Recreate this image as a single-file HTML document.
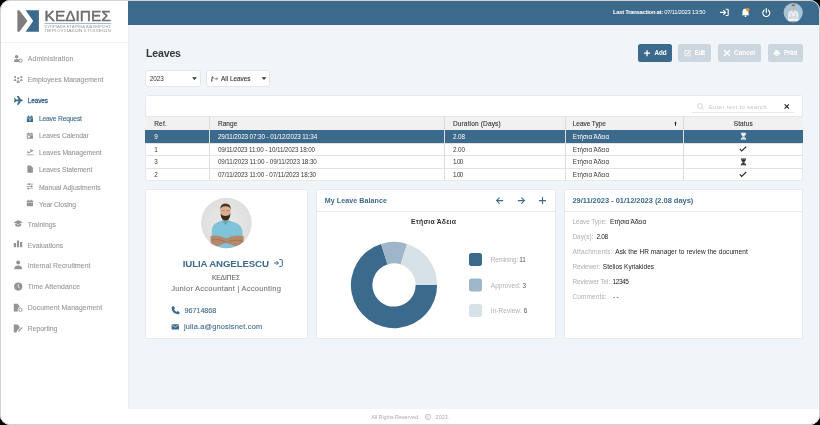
<!DOCTYPE html>
<html><head><meta charset="utf-8">
<style>
html,body{margin:0;padding:0;width:820px;height:425px;overflow:hidden;background:#000;}
#c{position:absolute;left:0;top:0;width:820px;height:425px;border-radius:10px;overflow:hidden;background:#fff;will-change:transform;font-family:"Liberation Sans",sans-serif;}
#bd{position:absolute;left:0;top:0;width:818px;height:423px;border:1px solid #d3d3d3;border-radius:10px;}
.a{position:absolute;box-sizing:border-box}
.t{position:absolute;line-height:1;white-space:nowrap}
svg{position:absolute;overflow:visible}
.card{position:absolute;box-sizing:border-box;background:#fff;border:1px solid #e5e8ec;border-radius:2.5px;}
</style></head><body>
<div id="c">
<!-- sidebar -->
<div class="a" style="left:1px;top:42px;width:127px;height:1px;background:#eef1f5"></div>
<!-- logo -->
<svg style="left:0;top:0" width="120" height="40" viewBox="0 0 120 40">
  <polygon points="17.4,10.3 19.4,10.3 27.4,21 19.4,31.7 17.4,31.7" fill="#7d7d80"/>
  <polygon points="25.6,10.3 38.9,10.3 38.9,31.7 25.6,31.7 33.2,21" fill="#3c6a8c"/>
  <text x="44.6" y="20.8" font-family="Liberation Sans" font-size="14.6" fill="#6d6d70" stroke="#6d6d70" stroke-width="0.45" textLength="66.2" lengthAdjust="spacingAndGlyphs">ΚΕΔΙΠΕΣ</text>
  <rect x="44.6" y="23.1" width="66.5" height="0.6" fill="#5f8db0"/>
  <text x="44.6" y="27.7" font-family="Liberation Sans" font-size="3.3" fill="#9c9ca0" textLength="66.5" lengthAdjust="spacingAndGlyphs">ΚΥΠΡΙΑΚΗ ΕΤΑΙΡΕΙΑ ΔΙΑΧΕΙΡΙΣΗΣ</text>
  <text x="44.6" y="31.5" font-family="Liberation Sans" font-size="3.3" fill="#9c9ca0" textLength="66.5" lengthAdjust="spacingAndGlyphs">ΠΕΡΙΟΥΣΙΑΚΩΝ ΣΤΟΙΧΕΙΩΝ</text>
</svg>
<!-- sidebar icons -->
<svg style="left:0;top:0" width="40" height="340" viewBox="0 0 40 340" fill="#93939a">
  <!-- admin: user-cog -->
  <circle cx="16.6" cy="56.8" r="1.8"/>
  <path d="M13.9 62 Q13.9 59 16.6 59 Q18.6 59 19.2 60 L19.2 62 Z"/>
  <circle cx="20.6" cy="60.6" r="1.6" fill="none" stroke="#959595" stroke-width="1"/>
  <!-- employees -->
  <circle cx="15.1" cy="77.1" r="1.05"/><circle cx="21.3" cy="77.1" r="1.05"/><circle cx="18.2" cy="78.3" r="1.15"/>
  <path d="M13.8 80.9 q0 -1.9 1.3 -1.9 q1.3 0 1.3 1.9z M20 80.9 q0 -1.9 1.3 -1.9 q1.3 0 1.3 1.9z M16.5 82.8 q0 -2.6 1.7 -2.6 q1.7 0 1.7 2.6z"/>
  <!-- plane (blue) -->
  <path fill="#3c6a8c" d="M13.9 98.2 L15.1 98.2 L16.2 99.5 L18.6 99.5 L16.8 95.9 L18.6 95.9 L21 99.5 L22.2 99.5 Q23.2 100.35 22.2 101.2 L21 101.2 L18.6 104.8 L16.8 104.8 L18.6 101.2 L16.2 101.2 L15.1 102.5 L13.9 102.5 L14.6 100.35 Z"/>
  <!-- sub: calendar plus blue -->
  <g fill="#3c6a8c"><rect x="26.8" y="116.4" width="6.2" height="5.6" rx="0.6"/><rect x="28.1" y="115.4" width="0.8" height="1.6"/><rect x="30.9" y="115.4" width="0.8" height="1.6"/></g>
  <rect x="26.8" y="117.8" width="6.2" height="0.5" fill="#fff"/>
  <path d="M29.1 119.9 h1.6 M29.9 119.1 v1.6" stroke="#fff" stroke-width="0.6"/>
  <!-- calendar -->
  <rect x="26.8" y="133.3" width="6.2" height="5.4" rx="0.6"/><rect x="28.1" y="132.4" width="0.8" height="1.5"/><rect x="30.9" y="132.4" width="0.8" height="1.5"/>
  <rect x="26.8" y="134.7" width="6.2" height="0.5" fill="#fff"/><rect x="27.8" y="135.9" width="2" height="1.6" fill="#fff"/>
  <!-- plane departure -->
  <path d="M26.7 154.6 h7 v0.7 h-7z"/>
  <path d="M26.9 151.4 L27.8 151.2 L28.9 152 L31 150.9 L29.6 149.5 L30.5 149.3 L33 150.3 Q33.7 150.4 33.3 150.9 L28.6 153.3 L27.7 153.3 Z"/>
  <!-- file -->
  <path d="M27.4 165.6 h3.3 l2.2 2.2 v4.9 h-5.5z"/>
  <!-- sliders -->
  <path d="M26.8 183.8 h6.2 v0.6 h-6.2z M26.8 186.1 h6.2 v0.6 h-6.2z M26.8 188.5 h6.2 v0.6 h-6.2z"/>
  <rect x="28.8" y="183" width="1.1" height="2" /><rect x="30.9" y="185.4" width="1.1" height="2"/><rect x="27.6" y="187.8" width="1.1" height="2"/>
  <!-- calendar -->
  <rect x="26.8" y="200.6" width="6.2" height="5.6" rx="0.6"/><rect x="28.1" y="199.7" width="0.8" height="1.5"/><rect x="30.9" y="199.7" width="0.8" height="1.5"/>
  <rect x="26.8" y="202" width="6.2" height="0.45" fill="#fff"/>
  <!-- trainings: grad cap -->
  <path d="M13.6 222.2 L18.2 220.2 L22.8 222.2 L18.2 224.2 Z"/>
  <path d="M15.3 223.4 v2.6 Q18.2 227.4 21.1 226 v-2.6 L18.2 224.8 Z"/>
  <!-- evaluations: bars -->
  <rect x="13.8" y="243" width="2.2" height="4.2"/><rect x="16.9" y="240.5" width="2.2" height="6.7"/><rect x="20" y="242" width="2.2" height="5.2"/>
  <!-- internal recruitment: user -->
  <circle cx="18.2" cy="262.6" r="2"/>
  <path d="M14.2 269.2 Q14.2 265.4 18.2 265.4 Q22.2 265.4 22.2 269.2 Z"/>
  <!-- time: clock -->
  <circle cx="18.2" cy="286.6" r="4.1"/>
  <path d="M18.2 284.2 v2.6 l1.6 1" stroke="#fff" stroke-width="0.8" fill="none"/>
  <!-- document management -->
  <path d="M13.8 303.8 h3.6 l2.2 2.2 v1.2 a2.6 2.6 0 0 0 -1.4 4.2 h-4.4z"/>
  <circle cx="20.4" cy="309.8" r="1.7" fill="none" stroke="#959595" stroke-width="0.9"/>
  <!-- reporting -->
  <path d="M13.8 324.4 h3.6 l2.2 2.2 v1.6 l-2.6 2.6 l-0.4 1.6 h-2.8z"/>
  <path d="M18.2 330.8 L22 327 L22.8 327.8 L19 331.6 L18 331.8 Z"/>
</svg>
<!-- header -->
<div class="a" style="left:128px;top:0;width:692px;height:25px;background:#3c6a8c"></div>
<svg style="left:0;top:0" width="820" height="25" viewBox="0 0 820 25">
  <!-- sign-in -->
  <path d="M720 12.4 h5 M723.3 10.2 l2.3 2.2 l-2.3 2.2" stroke="#fff" stroke-width="1.1" fill="none"/>
  <path d="M725.6 9.3 h1.8 q0.8 0 0.8 0.8 v4.6 q0 0.8 -0.8 0.8 h-1.8" stroke="#fff" stroke-width="1.1" fill="none"/>
  <!-- bell -->
  <path d="M745.5 8.6 q-3 0.2 -3 3.4 v2.2 l-0.9 1 h7.8 l-0.9 -1 v-2.2 q0 -3.2 -3 -3.4z" fill="#fff"/>
  <circle cx="745.5" cy="16.2" r="0.9" fill="#fff"/>
  <circle cx="747.8" cy="9.6" r="1.8" fill="#f08a24"/>
  <!-- power -->
  <path d="M764.2 10.2 a3.5 3.5 0 1 0 4.2 0" stroke="#fff" stroke-width="1.1" fill="none" stroke-linecap="round"/>
  <path d="M766.3 8.6 v4" stroke="#fff" stroke-width="1.1" stroke-linecap="round"/>
  <!-- avatar -->
  <defs><clipPath id="av1"><circle cx="793.2" cy="12.6" r="9.6"/></clipPath></defs>
  <circle cx="793.2" cy="12.6" r="9.6" fill="#a9c5d5"/>
  <g clip-path="url(#av1)">
    <path d="M788 23 L788.2 14.2 Q788.4 11.6 790.4 11.1 L792 10.6 h2.6 L796.2 11.1 Q798.2 11.6 798.4 14.2 L798.6 23 Z" fill="#edf0f3"/>
    <path d="M792 10.6 L793.3 13.4 L794.6 10.6 Z" fill="#b6cadb"/>
    <path d="M788.4 16.8 Q793.3 15.6 798.4 16.8 L798.4 19 Q793.3 17.8 788.4 19 Z" fill="#d3dbe2"/>
    <path d="M790.8 12.6 q-0.2 3.2 1.2 4.2 M795.8 12.6 q0.2 3.2 -1.2 4.2" stroke="#7d8a96" stroke-width="0.35" fill="none"/>
    <ellipse cx="793.3" cy="7.2" rx="1.6" ry="2.3" fill="#d7b39c"/>
    <path d="M791.6 6.8 Q791.4 4.3 793.3 4.3 Q795.2 4.3 795 6.8 Q794.4 5.5 793.3 5.5 Q792.2 5.5 791.6 6.8 Z" fill="#6a4a38"/>
    <path d="M789 22.2 h8.6" stroke="#4a5560" stroke-width="1.2"/>
  </g>
</svg>
<!-- content bg -->
<div class="a" style="left:128px;top:25px;width:692px;height:383.5px;background:#f1f4f9"></div>
<div class="a" style="left:128px;top:25px;width:2px;height:383.5px;background:linear-gradient(90deg,rgba(0,0,30,0.035),rgba(0,0,30,0))"></div>
<!-- selects -->
<div class="a" style="left:145.2px;top:69.6px;width:56.2px;height:17.9px;background:#fff;border:1px solid #e3e7ec;border-radius:3px"></div>
<div class="a" style="left:205.8px;top:69.6px;width:64.6px;height:17.9px;background:#fff;border:1px solid #e3e7ec;border-radius:3px"></div>
<svg style="left:0;top:0" width="300" height="100" viewBox="0 0 300 100">
  <path d="M192.1 77.2 h4.8 l-2.4 2.8z" fill="#333"/>
  <path d="M261.6 77.2 h4.8 l-2.4 2.8z" fill="#333"/>
  <path d="M211 77.9 h3.2 M211 80.1 h2.2 M212.6 76 l-1.2 5.8" stroke="#333" stroke-width="0.6" fill="none"/>
  <path d="M214.5 78.8 h3 M216.4 77.8 l1.1 1 l-1.1 1" stroke="#333" stroke-width="0.6" fill="none"/>
</svg>
<!-- buttons -->
<div class="a" style="left:637.9px;top:44.4px;width:34px;height:17.2px;background:#3c6a8c;border-radius:2.5px"></div>
<div class="a" style="left:677.9px;top:44.4px;width:33.2px;height:17.2px;background:#ccd6de;border-radius:2.5px"></div>
<div class="a" style="left:717.9px;top:44.4px;width:43px;height:17.2px;background:#ccd6de;border-radius:2.5px"></div>
<div class="a" style="left:767.7px;top:44.4px;width:35.2px;height:17.2px;background:#ccd6de;border-radius:2.5px"></div>
<svg style="left:0;top:0" width="820" height="70" viewBox="0 0 820 70">
  <path d="M644 53.2 h6.1 M647.05 50.2 v6" stroke="#fff" stroke-width="1.3"/>
  <path d="M689.4 50.6 h-4.4 v5.2 h5.2 v-2.6" stroke="#fff" stroke-width="0.8" fill="none"/>
  <path d="M686.8 53.6 l3.6 -3.6 l0.8 0.8 l-3.6 3.6 h-0.8z" fill="#fff"/>
  <path d="M724 50 l6 6 M730 50 l-6 6" stroke="#fff" stroke-width="1.4"/>
  <rect x="775.1" y="50.3" width="3.4" height="1.7" fill="#fff"/>
  <rect x="773.7" y="52.2" width="6.2" height="2.6" rx="0.6" fill="#fff"/>
  <rect x="775.1" y="54.2" width="3.4" height="1.5" fill="#ccd6de"/>
  <rect x="775.5" y="54.6" width="2.6" height="1.2" fill="#fff"/>
</svg>
<!-- table card -->
<div class="card" style="left:145.4px;top:95.4px;width:657.8px;height:85.6px;overflow:hidden">
</div>
<div class="a" style="left:145.4px;top:115.6px;width:657.8px;height:14.4px;background:#f1f1f1;border-top:1px solid #e7e7e7"></div>
<div class="a" style="left:145.4px;top:130px;width:657.8px;height:12.6px;background:#3c6a8c"></div>
<div class="a" style="left:146.4px;top:142.6px;width:655.8px;height:1px;background:#e3e3e3"></div>
<div class="a" style="left:146.4px;top:155.3px;width:655.8px;height:1px;background:#e3e3e3"></div>
<div class="a" style="left:146.4px;top:168.3px;width:655.8px;height:1px;background:#e3e3e3"></div>
<div class="a" style="left:209.2px;top:116px;width:1px;height:64.5px;background:#dcdcdc"></div>
<div class="a" style="left:444.4px;top:116px;width:1px;height:64.5px;background:#dcdcdc"></div>
<div class="a" style="left:564.5px;top:116px;width:1px;height:64.5px;background:#dcdcdc"></div>
<div class="a" style="left:683px;top:116px;width:1px;height:64.5px;background:#dcdcdc"></div>
<div class="a" style="left:692px;top:112px;width:102px;height:1px;background:#e8e8e8"></div>
<svg style="left:0;top:0" width="820" height="185" viewBox="0 0 820 185">
  <circle cx="700" cy="106" r="2.4" fill="none" stroke="#c8c8c8" stroke-width="0.8"/>
  <path d="M701.8 107.8 l2 2" stroke="#c8c8c8" stroke-width="0.8"/>
  <path d="M784.6 104.4 l4.3 4.2 M788.9 104.4 l-4.3 4.2" stroke="#222" stroke-width="1.1"/>
  <path d="M675.5 121.6 l1.3 1.6 h-0.8 v2.6 h-1 v-2.6 h-0.8z" fill="#222"/>
  <!-- hourglass -->
  <path d="M740.9 132.7 h5.2 v1 h-5.2z M740.9 138.5 h5.2 v1 h-5.2z" fill="#fff"/>
  <path d="M741.5 133.7 q0 2.2 1.8 2.9 q-1.8 0.7 -1.8 2.9 M745.5 133.7 q0 2.2 -1.8 2.9 q1.8 0.7 1.8 2.9" stroke="#fff" stroke-width="0.7" fill="none"/>
  <path d="M741.7 133.7 h3.6 q-0.2 1.6 -1.8 2.5 q-1.6 -0.9 -1.8 -2.5z M742.2 138.5 q0.4 -1.4 1.3 -1.6 q0.9 0.2 1.3 1.6z" fill="#fff"/>
  <path d="M740.9 158.4 h5.2 v1 h-5.2z M740.9 164.20000000000002 h5.2 v1 h-5.2z" fill="#222"/>
  <path d="M741.5 159.4 q0 2.2 1.8 2.9 q-1.8 0.7 -1.8 2.9 M745.5 159.4 q0 2.2 -1.8 2.9 q1.8 0.7 1.8 2.9" stroke="#222" stroke-width="0.7" fill="none"/>
  <path d="M741.7 159.4 h3.6 q-0.2 1.6 -1.8 2.5 q-1.6 -0.9 -1.8 -2.5z M742.2 164.20000000000002 q0.4 -1.4 1.3 -1.6 q0.9 0.2 1.3 1.6z" fill="#222"/>
  <path d="M739.8 148.9 l1.9 2.1 l4.5 -4.4" stroke="#222" stroke-width="1.05" fill="none"/>
  <path d="M739.8 174.3 l1.9 2.1 l4.5 -4.4" stroke="#222" stroke-width="1.05" fill="none"/>
</svg>
<!-- profile card -->
<div class="card" style="left:145.4px;top:189.4px;width:162.6px;height:149.6px"></div>
<svg style="left:0;top:0" width="320" height="345" viewBox="0 0 320 345">
  <defs><clipPath id="av2"><circle cx="226.4" cy="223" r="25.3"/></clipPath>
  <radialGradient id="g2" cx="0.5" cy="0.5" r="0.6"><stop offset="0" stop-color="#e9e9e9"/><stop offset="1" stop-color="#dddddd"/></radialGradient></defs>
  <circle cx="226.4" cy="223" r="25.3" fill="url(#g2)"/>
  <g clip-path="url(#av2)">
    <path d="M211.3 252 L211.8 231 Q212.3 224.2 217 222.6 L222 220.6 L229 220.6 L234.8 222.6 Q241 224.2 242.4 231 L243 252 Z" fill="#7fc3d8"/>
    <path d="M222 220.6 L225.6 225.2 L229 220.6 Z" fill="#5ea8c0"/>
    <rect x="222.6" y="216.5" width="6" height="4.4" fill="#c79879"/>
    <path d="M210.6 236.2 Q218 233.8 226.2 238.6 Q234.4 233.8 243.6 236.2 L243.8 246.4 Q235 247.6 226.2 242.6 Q217.4 247.6 210.6 246.4 Z" fill="#b5876b"/>
    <path d="M212 240 Q219 238 226.2 242.6 Q233 239 242 241" stroke="#9a6e55" stroke-width="0.7" fill="none"/>
    <ellipse cx="225.5" cy="212.2" rx="5.2" ry="6.6" fill="#dcae92"/>
    <path d="M220.2 210.2 Q219.8 203.5 225.5 203.5 Q231.2 203.5 230.8 210.2 Q230.2 206.4 225.5 206.3 Q220.8 206.4 220.2 210.2 Z" fill="#4a3628"/>
    <path d="M220.6 213.8 Q221 220.4 225.5 220.4 Q230 220.4 230.4 213.8 Q228.6 216 225.5 216 Q222.4 216 220.6 213.8 Z" fill="#3a2a20"/>
    <path d="M221 210.6 h3.6 M226.4 210.6 h3.6" stroke="#8a7060" stroke-width="0.45"/>
  </g>
  <!-- sign-in icon -->
  <path d="M274 263 h4.4 M276.4 261 l2 2 l-2 2" stroke="#3c6a8c" stroke-width="1" fill="none"/>
  <path d="M279.2 259.6 h2.2 q0.9 0 0.9 0.9 v5 q0 0.9 -0.9 0.9 h-2.2" stroke="#3c6a8c" stroke-width="1" fill="none"/>
  <!-- phone -->
  <path d="M172.2 306.4 l1.8 -0.2 l1 2.2 l-1 0.9 q0.8 1.8 2.5 2.6 l0.9 -1 l2.2 1 l-0.2 1.8 q-0.3 0.6 -1.2 0.6 q-6.8 -0.8 -6.6 -6.7 q0 -0.9 0.6 -1.2z" fill="#3c6a8c"/>
  <!-- envelope -->
  <rect x="171.6" y="324.2" width="7.4" height="5.2" rx="0.5" fill="#3c6a8c"/>
  <path d="M171.8 324.8 l3.5 2.4 l3.5 -2.4" stroke="#fff" stroke-width="0.6" fill="none"/>
</svg>
<!-- balance card -->
<div class="card" style="left:316.4px;top:189.4px;width:239.6px;height:149.6px"></div>
<div class="a" style="left:317.4px;top:211px;width:237.6px;height:1px;background:#e8ebef"></div>
<svg style="left:0;top:0" width="820" height="345" viewBox="0 0 820 345">
  <path d="M496.8 200.6 h6.4 M499.6 197.6 l-3 3 l3 3" stroke="#3c6a8c" stroke-width="1.1" fill="none"/>
  <path d="M517.8 200.6 h6.4 M521.4 197.6 l3 3 l-3 3" stroke="#3c6a8c" stroke-width="1.1" fill="none"/>
  <path d="M539 200.6 h7 M542.5 197.1 v7" stroke="#3c6a8c" stroke-width="1.1" fill="none"/>
  <!-- donut -->
  <path d="M437.1 285 A43.1 43.1 0 1 1 381.1 243.9 L387.5 264.4 A21.6 21.6 0 1 0 415.6 285 Z" fill="#3c6a8c"/>
  <path d="M381.1 243.9 A43.1 43.1 0 0 1 407.1 243.9 L400.6 264.4 A21.6 21.6 0 0 0 387.5 264.4 Z" fill="#9fb6c9"/>
  <path d="M407.1 243.9 A43.1 43.1 0 0 1 437.1 285 L415.6 285 A21.6 21.6 0 0 0 400.6 264.4 Z" fill="#d6e1e8"/>
  <rect x="469" y="253" width="13" height="13" rx="2.5" fill="#3c6a8c"/>
  <rect x="469" y="278.6" width="13" height="13" rx="2.5" fill="#9fb6c9"/>
  <rect x="469" y="304" width="13" height="13" rx="2.5" fill="#d6e1e8"/>
</svg>
<!-- details card -->
<div class="card" style="left:564.4px;top:189.4px;width:238.4px;height:149.6px"></div>
<div class="a" style="left:565.4px;top:211px;width:236.4px;height:1px;background:#e8ebef"></div>
<!-- footer -->
<svg style="left:0;top:0" width="820" height="425" viewBox="0 0 820 425">
  <circle cx="428" cy="417" r="2.7" fill="none" stroke="#aaa" stroke-width="0.6"/>
  <path d="M429.1 416.1 a1.3 1.3 0 1 0 0 1.8" stroke="#aaa" stroke-width="0.5" fill="none"/>
</svg>
<div class="t" style="left:612.9px;top:10px;font-size:5.90px;font-weight:400;color:#fff;letter-spacing:-0.280px;"><b>Last Transaction at:</b> 07/11/2023 13:50</div>
<div class="t" style="left:27.8px;top:56px;font-size:6.80px;font-weight:400;color:#98989c;letter-spacing:0.186px;-webkit-text-stroke:0.1px currentColor;">Administration</div>
<div class="t" style="left:27.8px;top:77px;font-size:6.80px;font-weight:400;color:#98989c;letter-spacing:0.020px;-webkit-text-stroke:0.1px currentColor;">Employees Management</div>
<div class="t" style="left:27.8px;top:98px;font-size:6.40px;font-weight:400;color:#3c6a8c;letter-spacing:-0.088px;-webkit-text-stroke:0.3px currentColor;">Leaves</div>
<div class="t" style="left:38.9px;top:116px;font-size:6.80px;font-weight:400;color:#3c6a8c;letter-spacing:-0.221px;-webkit-text-stroke:0.1px currentColor;">Leave Request</div>
<div class="t" style="left:38.9px;top:133px;font-size:6.80px;font-weight:400;color:#98989c;letter-spacing:-0.108px;-webkit-text-stroke:0.1px currentColor;">Leaves Calendar</div>
<div class="t" style="left:38.9px;top:150px;font-size:6.80px;font-weight:400;color:#98989c;letter-spacing:-0.039px;-webkit-text-stroke:0.1px currentColor;">Leaves Management</div>
<div class="t" style="left:38.9px;top:167px;font-size:6.80px;font-weight:400;color:#98989c;letter-spacing:-0.094px;-webkit-text-stroke:0.1px currentColor;">Leaves Statement</div>
<div class="t" style="left:38.9px;top:185px;font-size:6.80px;font-weight:400;color:#98989c;letter-spacing:0.039px;-webkit-text-stroke:0.1px currentColor;">Manual Adjustments</div>
<div class="t" style="left:38.9px;top:202px;font-size:6.80px;font-weight:400;color:#98989c;letter-spacing:-0.101px;-webkit-text-stroke:0.1px currentColor;">Year Closing</div>
<div class="t" style="left:27.8px;top:222px;font-size:6.80px;font-weight:400;color:#98989c;letter-spacing:0.060px;-webkit-text-stroke:0.1px currentColor;">Trainings</div>
<div class="t" style="left:27.8px;top:243px;font-size:6.80px;font-weight:400;color:#98989c;letter-spacing:0.014px;-webkit-text-stroke:0.1px currentColor;">Evaluations</div>
<div class="t" style="left:27.8px;top:263px;font-size:6.80px;font-weight:400;color:#98989c;letter-spacing:0.077px;-webkit-text-stroke:0.1px currentColor;">Internal Recruitment</div>
<div class="t" style="left:27.8px;top:284px;font-size:6.80px;font-weight:400;color:#98989c;letter-spacing:0.101px;-webkit-text-stroke:0.1px currentColor;">Time Attendance</div>
<div class="t" style="left:27.8px;top:305px;font-size:6.80px;font-weight:400;color:#98989c;letter-spacing:0.096px;-webkit-text-stroke:0.1px currentColor;">Document Management</div>
<div class="t" style="left:27.8px;top:326px;font-size:6.80px;font-weight:400;color:#98989c;letter-spacing:0.014px;-webkit-text-stroke:0.1px currentColor;">Reporting</div>
<div class="t" style="left:146.0px;top:48px;font-size:10.60px;font-weight:700;color:#383838;letter-spacing:-0.191px;">Leaves</div>
<div class="t" style="left:149.8px;top:76px;font-size:6.40px;font-weight:400;color:#333;letter-spacing:-0.047px;">2023</div>
<div class="t" style="left:221.0px;top:76px;font-size:6.40px;font-weight:400;color:#333;-webkit-text-stroke:0.1px currentColor;">All Leaves</div>
<div class="t" style="left:654.5px;top:50px;font-size:6.30px;font-weight:700;color:#fff;letter-spacing:-0.028px;">Add</div>
<div class="t" style="left:694.7px;top:50px;font-size:6.30px;font-weight:700;color:#fff;letter-spacing:-0.467px;">Edit</div>
<div class="t" style="left:734.1px;top:50px;font-size:6.30px;font-weight:700;color:#fff;letter-spacing:0.068px;">Cancel</div>
<div class="t" style="left:784.0px;top:50px;font-size:6.30px;font-weight:700;color:#fff;letter-spacing:-0.238px;">Print</div>
<div class="t" style="left:709.0px;top:104px;font-size:6.00px;font-weight:400;color:#c4c4c4;letter-spacing:0.288px;">Enter text to search</div>
<div class="t" style="left:154.2px;top:121px;font-size:6.50px;font-weight:400;color:#333;letter-spacing:0.192px;-webkit-text-stroke:0.1px currentColor;">Ref.</div>
<div class="t" style="left:217.9px;top:121px;font-size:6.50px;font-weight:400;color:#333;letter-spacing:0.061px;-webkit-text-stroke:0.1px currentColor;">Range</div>
<div class="t" style="left:452.9px;top:121px;font-size:6.50px;font-weight:400;color:#333;letter-spacing:0.163px;-webkit-text-stroke:0.1px currentColor;">Duration (Days)</div>
<div class="t" style="left:572.8px;top:121px;font-size:6.50px;font-weight:400;color:#333;letter-spacing:-0.055px;-webkit-text-stroke:0.1px currentColor;">Leave Type</div>
<div class="t" style="left:733.7px;top:121px;font-size:6.50px;font-weight:400;color:#333;letter-spacing:0.113px;-webkit-text-stroke:0.1px currentColor;">Status</div>
<div class="t" style="left:154.2px;top:134px;font-size:6.30px;font-weight:400;color:#fff;letter-spacing:-0.304px;">9</div>
<div class="t" style="left:217.9px;top:134px;font-size:6.30px;font-weight:400;color:#fff;letter-spacing:-0.099px;">29/11/2023 07:30 - 01/12/2023 11:34</div>
<div class="t" style="left:452.9px;top:134px;font-size:6.30px;font-weight:400;color:#fff;letter-spacing:-0.088px;">2.08</div>
<div class="t" style="left:572.8px;top:134px;font-size:6.30px;font-weight:400;color:#fff;letter-spacing:0.028px;">Ετήσια Άδεια</div>
<div class="t" style="left:154.2px;top:147px;font-size:6.30px;font-weight:400;color:#3a3a3a;letter-spacing:-0.304px;">1</div>
<div class="t" style="left:217.9px;top:147px;font-size:6.30px;font-weight:400;color:#3a3a3a;letter-spacing:-0.150px;">09/11/2023 11:00 - 10/11/2023 18:00</div>
<div class="t" style="left:452.9px;top:147px;font-size:6.30px;font-weight:400;color:#3a3a3a;letter-spacing:-0.088px;">2.00</div>
<div class="t" style="left:572.8px;top:147px;font-size:6.30px;font-weight:400;color:#3a3a3a;letter-spacing:0.028px;">Ετήσια Άδεια</div>
<div class="t" style="left:154.2px;top:159px;font-size:6.30px;font-weight:400;color:#3a3a3a;letter-spacing:-0.304px;">3</div>
<div class="t" style="left:217.9px;top:159px;font-size:6.30px;font-weight:400;color:#3a3a3a;letter-spacing:-0.097px;">09/11/2023 11:00 - 09/11/2023 18:30</div>
<div class="t" style="left:452.9px;top:159px;font-size:6.30px;font-weight:400;color:#3a3a3a;letter-spacing:-0.622px;">1.00</div>
<div class="t" style="left:572.8px;top:159px;font-size:6.30px;font-weight:400;color:#3a3a3a;letter-spacing:0.028px;">Ετήσια Άδεια</div>
<div class="t" style="left:154.2px;top:172px;font-size:6.30px;font-weight:400;color:#3a3a3a;letter-spacing:-0.304px;">2</div>
<div class="t" style="left:217.9px;top:172px;font-size:6.30px;font-weight:400;color:#3a3a3a;letter-spacing:-0.118px;">07/11/2023 11:00 - 07/11/2023 18:30</div>
<div class="t" style="left:452.9px;top:172px;font-size:6.30px;font-weight:400;color:#3a3a3a;letter-spacing:-0.622px;">1.00</div>
<div class="t" style="left:572.8px;top:172px;font-size:6.30px;font-weight:400;color:#3a3a3a;letter-spacing:0.028px;">Ετήσια Άδεια</div>
<div class="t" style="left:182.8px;top:259px;font-size:9.70px;font-weight:700;color:#3c6a8c;letter-spacing:-0.136px;">IULIA ANGELESCU</div>
<div class="t" style="left:211.9px;top:275px;font-size:6.60px;font-weight:400;color:#666;letter-spacing:-0.033px;-webkit-text-stroke:0.1px currentColor;">ΚΕΔΙΠΕΣ</div>
<div class="t" style="left:171.2px;top:285px;font-size:7.60px;font-weight:400;color:#777;letter-spacing:0.207px;-webkit-text-stroke:0.1px currentColor;">Junior Accountant | Accounting</div>
<div class="t" style="left:184.6px;top:307px;font-size:7.20px;font-weight:400;color:#3c6a8c;letter-spacing:-0.049px;-webkit-text-stroke:0.1px currentColor;">96714868</div>
<div class="t" style="left:183.9px;top:323px;font-size:7.40px;font-weight:400;color:#3c6a8c;letter-spacing:0.187px;-webkit-text-stroke:0.1px currentColor;">julia.a@gnosisnet.com</div>
<div class="t" style="left:324.8px;top:198px;font-size:7.10px;font-weight:700;color:#3c6a8c;letter-spacing:0.068px;">My Leave Balance</div>
<div class="t" style="left:411.1px;top:219px;font-size:6.80px;font-weight:700;color:#333;letter-spacing:0.217px;">Ετήσια Άδεια</div>
<div class="t" style="left:490.8px;top:257px;font-size:6.40px;font-weight:400;color:#b0b0b0;letter-spacing:-0.204px;">Remining: <span style="color:#555">11</span></div>
<div class="t" style="left:490.8px;top:283px;font-size:6.40px;font-weight:400;color:#b0b0b0;letter-spacing:0.078px;">Approved: <span style="color:#555">3</span></div>
<div class="t" style="left:490.8px;top:308px;font-size:6.40px;font-weight:400;color:#b0b0b0;letter-spacing:0.094px;">In-Review: <span style="color:#555">6</span></div>
<div class="t" style="left:572.4px;top:197px;font-size:7.50px;font-weight:700;color:#3c6a8c;letter-spacing:-0.038px;">29/11/2023 - 01/12/2023 (2.08 days)</div>
<div class="t" style="left:572.4px;top:219px;font-size:6.50px;font-weight:400;color:#b0b0b0;letter-spacing:-0.090px;">Leave Type:</div>
<div class="t" style="left:610.0px;top:219px;font-size:6.50px;font-weight:400;color:#222;letter-spacing:-0.095px;">Ετήσια Άδεια</div>
<div class="t" style="left:572.4px;top:234px;font-size:6.50px;font-weight:400;color:#b0b0b0;letter-spacing:0.025px;">Day(s):</div>
<div class="t" style="left:596.5px;top:234px;font-size:6.50px;font-weight:400;color:#222;letter-spacing:-0.385px;">2.08</div>
<div class="t" style="left:572.4px;top:249px;font-size:6.50px;font-weight:400;color:#b0b0b0;letter-spacing:0.206px;">Attachments:</div>
<div class="t" style="left:615.3px;top:249px;font-size:6.50px;font-weight:400;color:#222;letter-spacing:0.079px;">Ask the HR manager to review the document</div>
<div class="t" style="left:572.4px;top:264px;font-size:6.50px;font-weight:400;color:#b0b0b0;letter-spacing:-0.101px;">Reviewer:</div>
<div class="t" style="left:602.8px;top:264px;font-size:6.50px;font-weight:400;color:#222;letter-spacing:-0.006px;">Stelios Kyriakides</div>
<div class="t" style="left:572.4px;top:279px;font-size:6.50px;font-weight:400;color:#b0b0b0;letter-spacing:-0.092px;">Reviewer Tel:</div>
<div class="t" style="left:612.6px;top:279px;font-size:6.50px;font-weight:400;color:#222;letter-spacing:-0.445px;">12345</div>
<div class="t" style="left:572.4px;top:294px;font-size:6.50px;font-weight:400;color:#b0b0b0;letter-spacing:0.121px;">Comments:</div>
<div class="t" style="left:613.0px;top:294px;font-size:6.50px;font-weight:400;color:#222;letter-spacing:1.363px;">--</div>
<div class="t" style="left:371.2px;top:415px;font-size:5.40px;font-weight:400;color:#aaa;letter-spacing:-0.033px;">All Rights Reserved.</div>
<div class="t" style="left:435.6px;top:415px;font-size:5.40px;font-weight:400;color:#aaa;letter-spacing:0.046px;">2023.</div>
</div>
<div id="bd"></div>
</body></html>
